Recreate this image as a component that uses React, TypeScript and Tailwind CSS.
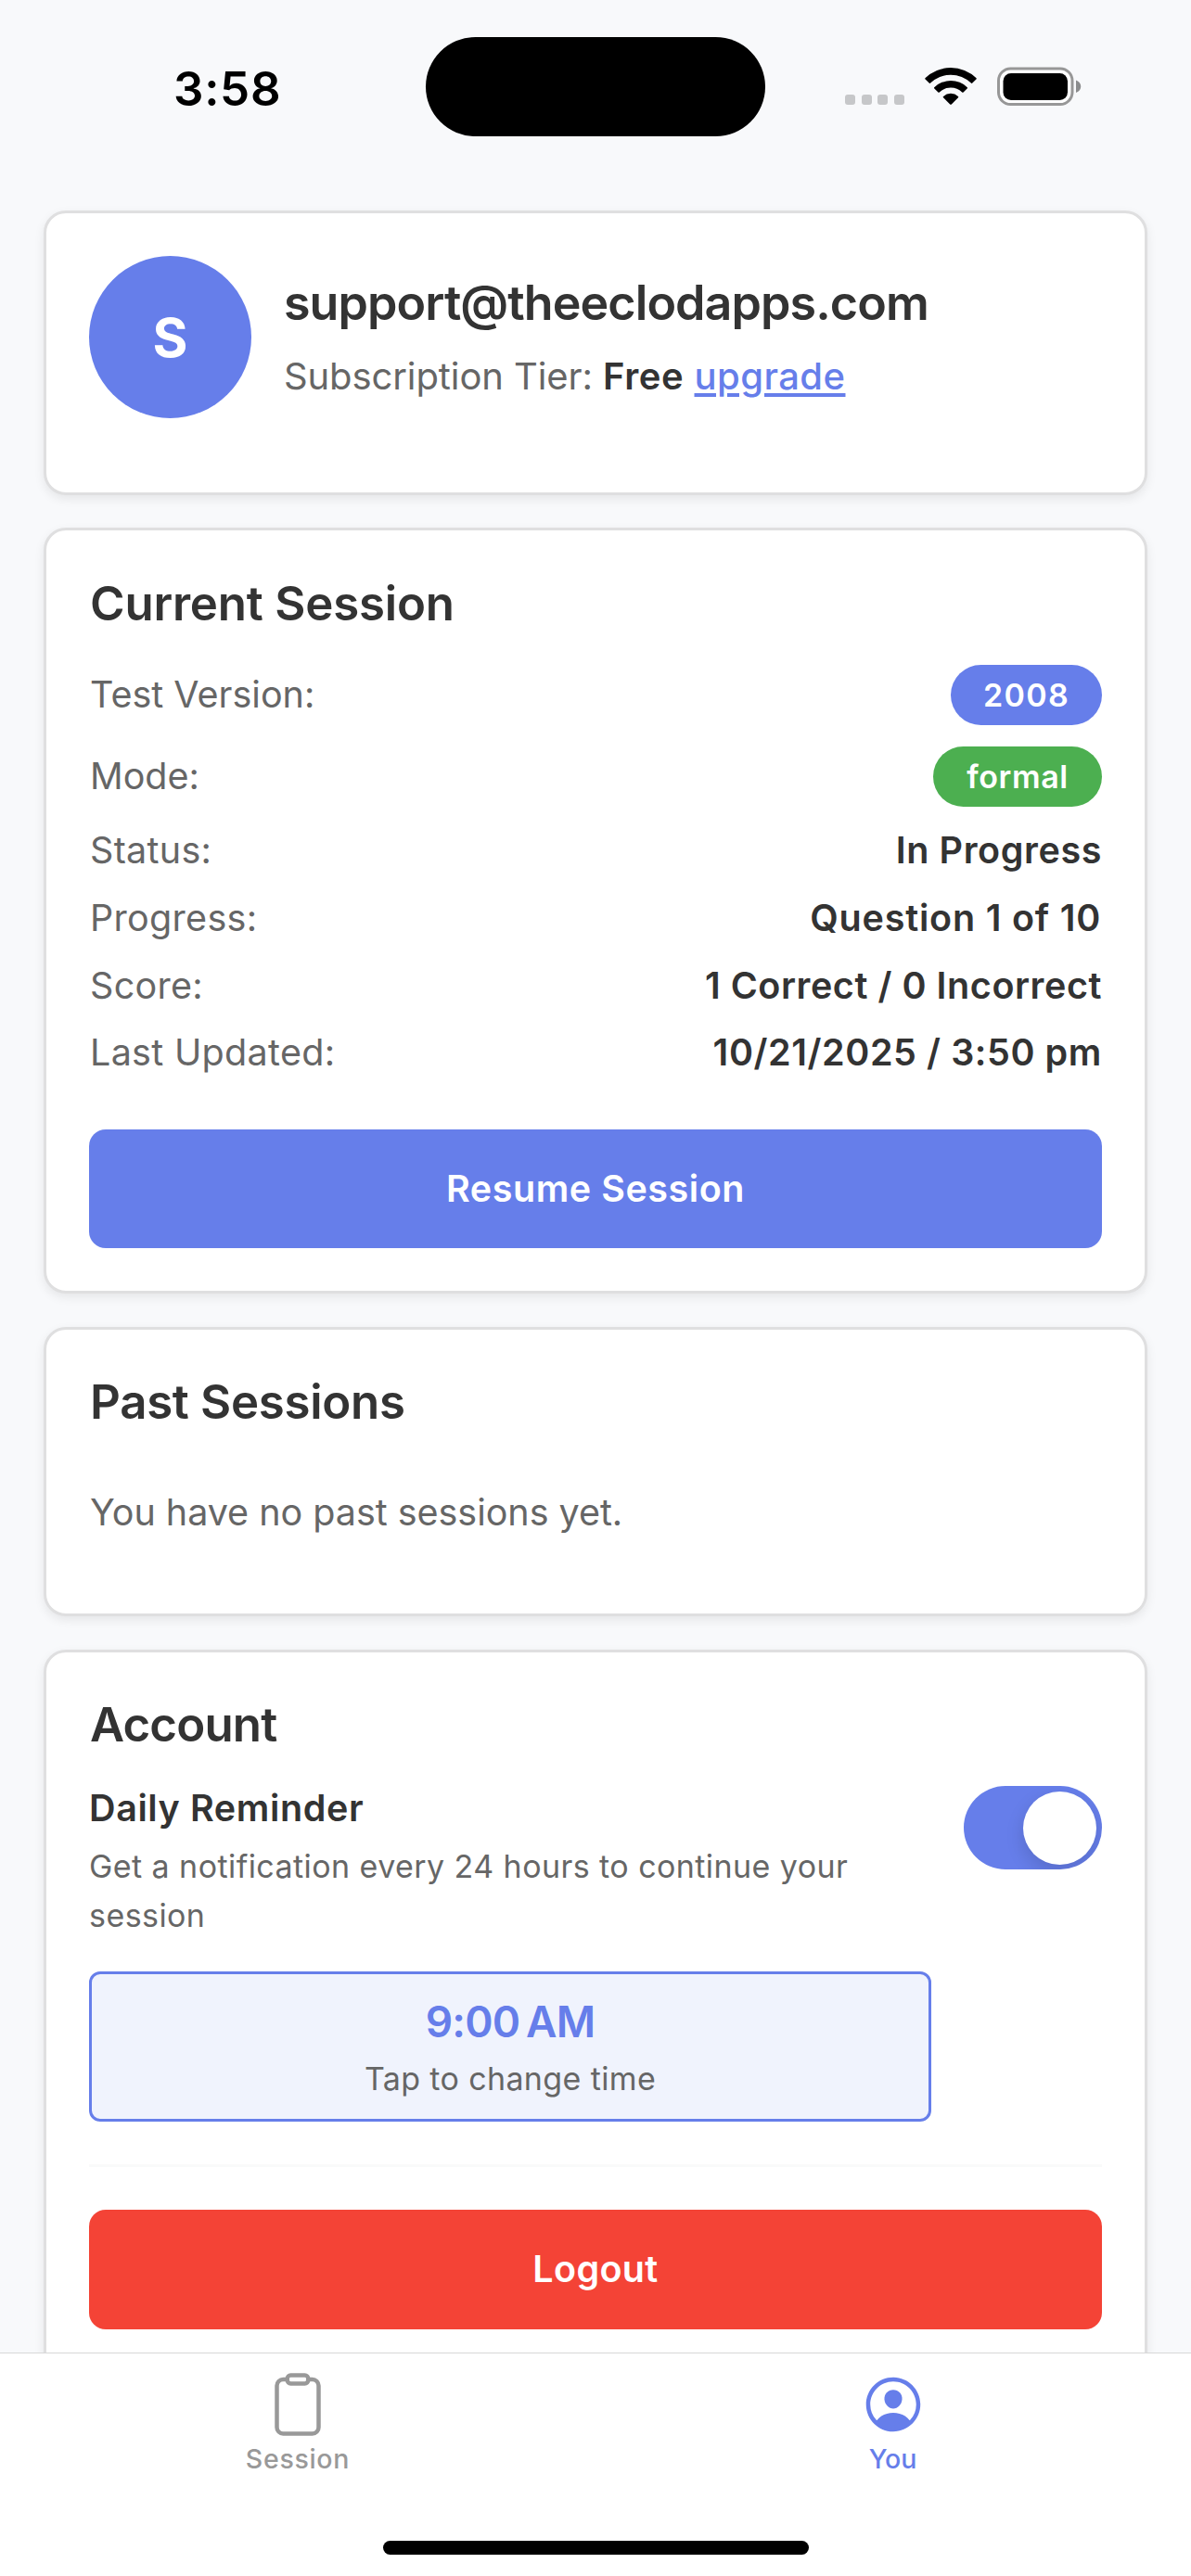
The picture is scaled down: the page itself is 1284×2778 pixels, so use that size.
import type { ReactNode } from "react";
import { IoClipboardOutline, IoPersonCircleOutline } from "react-icons/io5";

function StatusBar() {
  return (
    <header className="flex h-[187px] shrink-0 items-start">
      <div className="w-[459px] pl-[187px] pt-[66px] text-[51px] leading-[60px] font-semibold tracking-[0.7px] text-black">
        3:58
      </div>
      <div className="mt-10 h-[107px] w-[366px] rounded-full bg-black" />
      <div className="mt-[72px] ml-[86px] flex h-[42px] items-end">
        <div className="mb-px flex gap-[6.7px]">
          <span className="h-[11px] w-[11px] rounded-[3px] bg-[#c6c7c9]" />
          <span className="h-[11px] w-[11px] rounded-[3px] bg-[#c6c7c9]" />
          <span className="h-[11px] w-[11px] rounded-[3px] bg-[#c6c7c9]" />
          <span className="h-[11px] w-[11px] rounded-[3px] bg-[#c6c7c9]" />
        </div>
        <svg className="ml-[21.5px] h-[42px] w-[56px]" viewBox="0 0 56 42">
          <path d="M0.4 12.3 A39.5 39.5 0 0 1 55.6 12.3 Q56 13 55.4 13.6 L51.3 17.6 Q50.6 18.2 49.9 17.6 A31.5 31.5 0 0 0 6.1 17.6 Q5.4 18.2 4.7 17.6 L0.6 13.6 Q0 13 0.4 12.3 Z" />
          <path d="M10.2 22.2 A25.6 25.6 0 0 1 45.8 22.2 Q46.3 22.8 45.7 23.4 L41.6 27.5 Q40.9 28.1 40.2 27.5 A17.6 17.6 0 0 0 15.8 27.5 Q15.1 28.1 14.4 27.5 L10.3 23.4 Q9.7 22.8 10.2 22.2 Z" />
          <path d="M20 31.9 A11.8 11.8 0 0 1 36 31.9 Q36.7 32.5 36 33.2 L28.8 40.5 Q28 41.2 27.2 40.5 L20 33.2 Q19.3 32.5 20 31.9 Z" />
        </svg>
        <svg className="ml-[22px] h-[42px] w-[92px]" viewBox="0 0 92 42">
          <rect x="1.5" y="2" width="79.5" height="38.5" rx="13" fill="#fff" stroke="#979797" strokeWidth="3" />
          <rect x="6.5" y="7" width="69.5" height="29" rx="8.5" />
          <path d="M85 14.5 C92 17 92 25.5 85 28 Z" fill="#8b8c8d" />
        </svg>
      </div>
    </header>
  );
}

function Card({ className, children }: { className: string; children: ReactNode }) {
  return (
    <section
      className={`shrink-0 rounded-[24px] border-[3px] border-[#dfdfe0] bg-white px-[46px] shadow-[0_4px_11px_rgba(0,0,0,0.08)] ${className}`}
    >
      {children}
    </section>
  );
}

function Heading({ children, className = "" }: { children: ReactNode; className?: string }) {
  return (
    <h2 className={`pl-px text-[51px] leading-[60px] font-semibold text-[#333333] ${className}`}>{children}</h2>
  );
}

function BadgeRow({ label, value, badge }: { label: string; value: string; badge: string }) {
  return (
    <div className="flex h-[66px] items-center justify-between">
      <span className="pt-[2px] pl-px">{label}</span>
      <span
        className={`flex h-[65px] items-center justify-center rounded-full pt-px text-[34px] font-semibold text-white ${badge}`}
      >
        {value}
      </span>
    </div>
  );
}

function Row({ label, value, className }: { label: string; value: string; className: string }) {
  return (
    <div className="flex h-[50.75px] items-center justify-between leading-[50.75px]">
      <span className="pl-px tracking-[0.3px]">{label}</span>
      <span className={`font-semibold text-[#333333] ${className}`}>{value}</span>
    </div>
  );
}

export default function App() {
  return (
    <div className="flex h-[2778px] w-[1284px] flex-col overflow-hidden bg-[#f8f9fb] font-['Inter',sans-serif]">
      <StatusBar />

      <main className="flex min-h-0 flex-1 flex-col overflow-hidden px-[47px] pt-10">
        <Card className="mb-[35px] h-[307px] pt-[46px]">
          <div className="flex">
            <div className="flex h-[175px] w-[175px] items-center justify-center rounded-full bg-[#667eea] pt-[2px] text-[58px] font-bold text-white">
              S
            </div>
            <div className="ml-[35px] pt-[19px] whitespace-nowrap">
              <div className="text-[52px] leading-[64px] font-semibold tracking-[-0.94px] text-[#333333]">
                support@theeclodapps.com
              </div>
              <div className="mt-5 text-[40px] leading-[54px] tracking-[-0.1px] text-[#666666]">
                Subscription Tier:{" "}
                <span className="font-semibold tracking-[0.6px] text-[#333333]">Free</span>{" "}
                <a className="font-medium tracking-[0.45px] text-[#667eea] underline decoration-[3.5px] underline-offset-[4px]">
                  upgrade
                </a>
              </div>
            </div>
          </div>
        </Card>

        <Card className="mb-9 h-[826px] pt-[49px]">
          <Heading className="tracking-[-0.2px]">Current Session</Heading>
          <div className="mt-[35px] flex flex-col gap-[22px] text-[39.5px] text-[#666666]">
            <BadgeRow label="Test Version:" value="2008" badge="w-[163px] bg-[#667eea] tracking-[1.3px]" />
            <BadgeRow label="Mode:" value="formal" badge="w-[182px] bg-[#4caf50] tracking-[0.6px]" />
            <Row label="Status:" value="In Progress" className="tracking-[0.6px]" />
            <Row label="Progress:" value="Question 1 of 10" className="pr-px tracking-[0.8px]" />
            <Row label="Score:" value="1 Correct / 0 Incorrect" className="tracking-[0.56px]" />
            <Row label="Last Updated:" value="10/21/2025 / 3:50 pm" className="tracking-[0.58px]" />
          </div>
          <button className="mt-[57px] flex h-[128px] w-full items-center justify-center rounded-[18px] bg-[#667eea] pt-px text-[39.5px] font-semibold tracking-[0.55px] text-white">
            Resume Session
          </button>
        </Card>

        <Card className="mb-9 h-[312px] pt-[48px]">
          <Heading className="tracking-[-0.3px]">Past Sessions</Heading>
          <p className="mt-[64px] pl-px text-[39.5px] leading-[51px] tracking-[-0.03px] text-[#666666]">
            You have no past sessions yet.
          </p>
        </Card>

        <Card className="h-[800px] pt-[48px]">
          <Heading className="tracking-[-0.85px]">Account</Heading>
          <div className="mt-[35px] flex items-start justify-between">
            <div className="w-[908px]">
              <h3 className="text-[39.5px] leading-[51px] font-semibold tracking-[0.6px] text-[#333333]">
                Daily Reminder
              </h3>
              <p className="mt-[11px] w-[860px] text-[34px] leading-[52.5px] tracking-[0.43px] text-[#666666]">
                Get a notification every 24 hours to continue your session
              </p>
              <div className="mt-[34px] h-[162px] rounded-[12px] border-[3px] border-[#667eea] bg-[#f0f3fd] pt-[23px] text-center">
                <div className="text-[46px] leading-[56px] font-semibold tracking-[-0.8px] text-[#667eea]">
                  9:00{"\u202f"}AM
                </div>
                <div className="mt-[11px] text-[34px] leading-[46px] tracking-[0.37px] text-[#666666]">
                  Tap to change time
                </div>
              </div>
            </div>
            <div className="mt-px flex h-[90px] w-[149px] items-center justify-end overflow-hidden rounded-full bg-[#667eea] pr-[6px]">
              <div className="h-[79px] w-[79px] rounded-full bg-white shadow-[0_8px_20px_rgba(0,0,0,0.14)]" />
            </div>
          </div>
          <div className="mt-[46px] border-t-[3px] border-[#f9fafa] pt-[46px]">
            <button className="flex h-[129px] w-full items-center justify-center rounded-[18px] bg-[#f44336] text-[39.5px] font-semibold tracking-[0.33px] text-white">
              Logout
            </button>
          </div>
        </Card>
      </main>

      <nav className="flex h-[241px] shrink-0 flex-col items-center border-t border-[#d8d8d8] bg-white">
        <div className="grid w-full grid-cols-2 pt-[19px] text-[28.5px] leading-[36px] font-medium">
          <div className="flex flex-col items-center text-[#999999]">
            <IoClipboardOutline size={72} />
            <span className="mt-[5px] tracking-[0.7px]">Session</span>
          </div>
          <div className="flex flex-col items-center text-[#667eea]">
            <IoPersonCircleOutline size={72} />
            <span className="mt-[5px] pr-px">You</span>
          </div>
        </div>
        <div className="mt-[70px] h-[15px] w-[459px] rounded-full bg-black" />
      </nav>
    </div>
  );
}
